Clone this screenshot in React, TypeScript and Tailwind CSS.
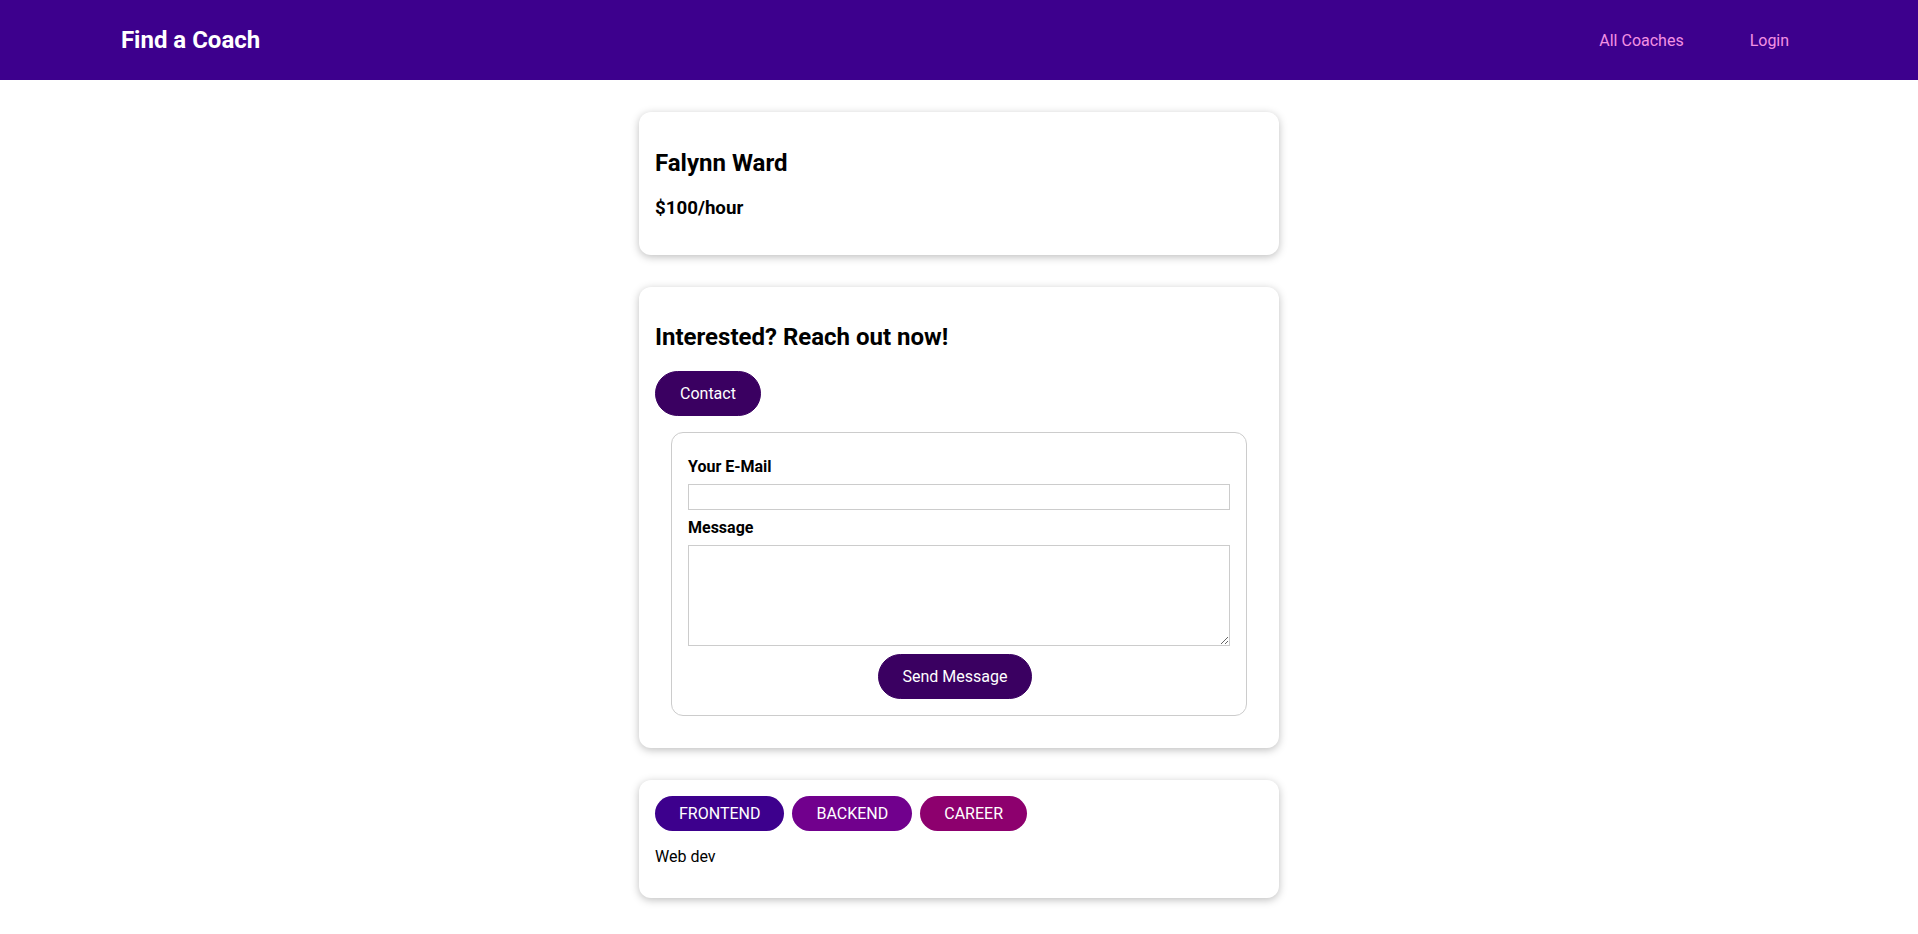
import React, { useState } from "react";

interface Coach {
  id: string;
  firstName: string;
  lastName: string;
  areas: string[];
  description: string;
  hourlyRate: number;
}

const coach: Coach = {
  id: "c1",
  firstName: "Falynn",
  lastName: "Ward",
  areas: ["frontend", "backend", "career"],
  description: "Web dev",
  hourlyRate: 100,
};

// badge colours per area
const badgeColors: Record<string, string> = {
  frontend: "bg-[#3d008d] text-white",
  backend: "bg-[#71008d] text-white",
  career: "bg-[#8d006e] text-white",
};

const BaseCard: React.FC<{ children: React.ReactNode }> = ({ children }) => (
  <div className="mx-auto my-8 max-w-[40rem] rounded-[12px] bg-white p-4 shadow-[0_2px_8px_rgba(0,0,0,0.26)]">
    {children}
  </div>
);

const BaseBadge: React.FC<{ type: string }> = ({ type }) => (
  <span
    className={
      "mr-2 inline-block rounded-[30px] px-6 py-2 " +
      (badgeColors[type] ?? "bg-[#cccccc] text-[#252525]")
    }
  >
    {type.toUpperCase()}
  </span>
);

const buttonClass =
  "mr-2 inline-block cursor-pointer rounded-[30px] border border-[#3a0061] bg-[#3a0061] px-6 py-3 text-white no-underline";

const ContactForm: React.FC = () => {
  const [email, setEmail] = useState("");
  const [message, setMessage] = useState("");

  return (
    <form
      className="m-4 rounded-[12px] border border-[#cccccc] p-4"
      onSubmit={(e) => e.preventDefault()}
    >
      <div className="my-2">
        <label htmlFor="email" className="mb-2 block font-bold">
          Your E-Mail
        </label>
        <input
          id="email"
          type="email"
          value={email}
          onChange={(e) => setEmail(e.target.value)}
          className="block w-full border border-[#cccccc] p-[0.15rem] leading-[normal] outline-none"
        />
      </div>
      <div className="my-2">
        <label htmlFor="message" className="mb-2 block font-bold">
          Message
        </label>
        <textarea
          id="message"
          rows={5}
          value={message}
          onChange={(e) => setMessage(e.target.value)}
          className="block w-full border border-[#cccccc] p-[0.15rem] leading-[normal] outline-none"
        />
      </div>
      <div className="text-center">
        <button type="submit" className={buttonClass}>
          Send Message
        </button>
      </div>
    </form>
  );
};

export default function App() {
  return (
    <div className="min-h-screen bg-white font-['Roboto',sans-serif] text-[16px] leading-[normal] text-black">
      <header className="flex h-20 w-full items-center justify-center bg-[#3d008d]">
        <nav className="mx-auto flex w-[90%] items-center justify-between">
          <h1 className="m-0 text-[24px] font-bold">
            <a
              href="#"
              className="inline-block border border-transparent px-6 py-3 text-white"
            >
              Find a Coach
            </a>
          </h1>
          <ul className="m-0 flex list-none p-0">
            <li className="mx-2">
              <a
                href="#"
                className="inline-block border border-transparent px-6 py-3 text-[#f391e3]"
              >
                All Coaches
              </a>
            </li>
            <li className="mx-2">
              <a
                href="#"
                className="inline-block border border-transparent px-6 py-3 text-[#f391e3]"
              >
                Login
              </a>
            </li>
          </ul>
        </nav>
      </header>

      <section>
        <BaseCard>
          <h2 className="mt-[21px] mb-[0.83em] text-[24px] font-bold">
            {coach.firstName} {coach.lastName}
          </h2>
          <h3 className="mt-[1em] mb-[20px] text-[18.72px] font-bold">
            ${coach.hourlyRate}/hour
          </h3>
        </BaseCard>
      </section>

      <section>
        <BaseCard>
          <header>
            <h2 className="my-[0.83em] text-[24px] font-bold">
              Interested? Reach out now!
            </h2>
            <a href="#" className={buttonClass}>
              Contact
            </a>
          </header>
          <ContactForm />
        </BaseCard>
      </section>

      <section>
        <BaseCard>
          {coach.areas.map((area) => (
            <BaseBadge key={area} type={area} />
          ))}
          <p className="my-4">{coach.description}</p>
        </BaseCard>
      </section>
    </div>
  );
}
